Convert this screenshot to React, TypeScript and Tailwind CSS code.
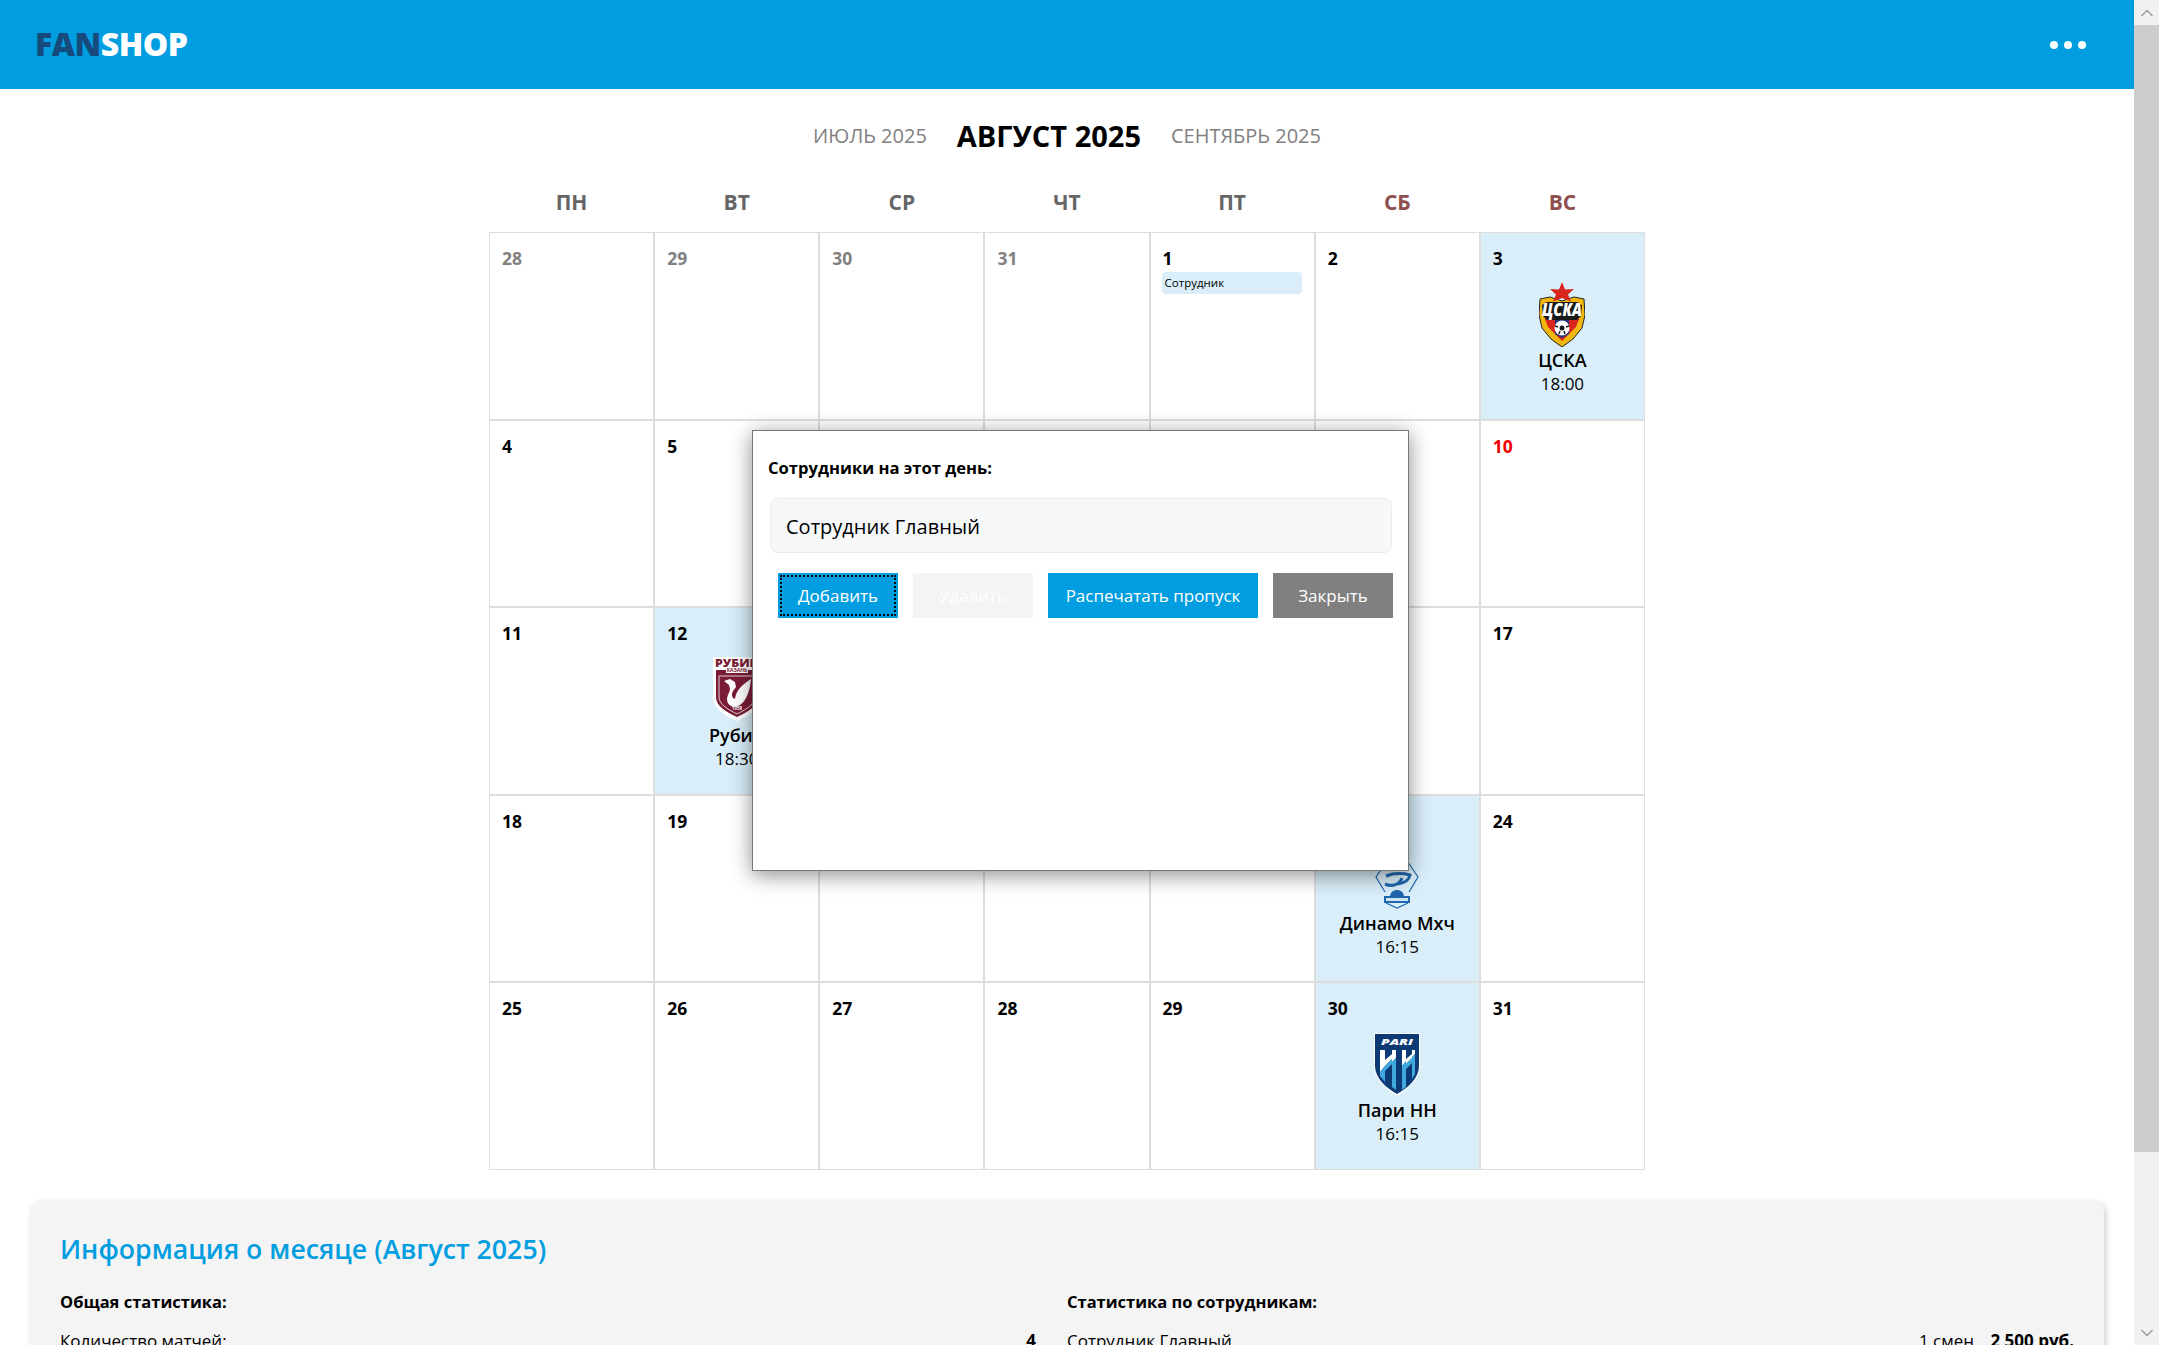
import React from 'react';
import { ChevronUp, ChevronDown } from 'lucide-react';

const font = { fontFamily: '"Open Sans", "Noto Sans", sans-serif' };

const CskaLogo = () => (
  <svg width="46" height="65" viewBox="0 0 46 65">
    <path d="M1 17l10-2 12 4 12-4 10 2 1 16-3 13-9 11-11 8-11-8-9-11-3-13z" fill="#f0b80f" stroke="#222" strokeWidth="1" />
    <path d="M23 0l3 7.500 9-.5-6 5.500 3 7-9-3.500-9 3.500 3-7-6-5.500 9 .5z" fill="#d9251d" />
    <path d="M6 20h34v17l-3 8-14 14-14-14-3-8z" fill="#d9251d" />
    <path d="M16 36h14v16l-7 4-7-4z" fill="#24317e" />
    <path d="M3 23l6-3h28l6 3-1 11-4 4H8l-4-4z" fill="#1a1a1a" />
    <text x="23" y="34" textAnchor="middle" fontSize="17" fontWeight="800" fontStyle="italic" fill="#fff" textLength="40" lengthAdjust="spacingAndGlyphs" style={font}>ЦСКА</text>
    <circle cx="23" cy="46" r="7.500" fill="#fff" />
    <circle cx="23" cy="46" r="2.500" fill="#1a1a1a" />
    <path d="M16 44l3 1M30 44l-3 1M20 52l1-3M26 52l-1-3" stroke="#1a1a1a" strokeWidth="1.500" />
  </svg>
);

const RubinLogo = () => (
  <svg width="48" height="64" viewBox="0 0 48 64">
    <path d="M0 0h48v40c0 11-12 19-24 24C12 59 0 51 0 40z" fill="#fff" />
    <text x="24" y="10" textAnchor="middle" fontSize="11" fontWeight="800" fill="#7a1c36" textLength="44" lengthAdjust="spacingAndGlyphs" style={font}>РУБИН</text>
    <text x="24" y="15" textAnchor="middle" fontSize="5" fontWeight="700" fill="#7a1c36" style={font}>КАЗАНЬ</text>
    <path d="M3 13h10v3h22v-3h10v27c0 9-10 15-21 20C13 55 3 49 3 40z" fill="#7a1c36" />
    <path d="M6 19h36v21c0 7-8 12-18 17C14 52 6 47 6 40z" fill="none" stroke="#fff" strokeWidth="0.800" />
    <path d="M11 24l6-2 5 3 1 5-3 4c-2 4-1 7 2 8 1-9 8-15 16-20-1 11-4 21-11 26-6 4-13 1-13-6 0-4 3-7 3-10l-1-4z" fill="#fff" />
    <text x="24" y="53" textAnchor="middle" fontSize="4.500" fontWeight="700" fill="#fff" style={font}>1958</text>
  </svg>
);

const DynamoLogo = () => (
  <svg width="44" height="64" viewBox="0 0 44 64">
    <path d="M22 1l21 31-9 15M22 1L1 32l9 15M11 58l11 5 11-5" fill="none" stroke="#1f66ad" strokeWidth="1.200" />
    <path d="M10 39c7 3 14 1 17-6M11 31c8-3 16-3 24-1-1 5-6 8-12 9" fill="none" stroke="#1f66ad" strokeWidth="3" />
    <path d="M15 51c1-8 13-8 14 0z" fill="#1f66ad" />
    <rect x="9" y="51" width="26" height="7" fill="#1f66ad" />
    <rect x="11" y="53" width="22" height="3" fill="#cfe4f3" />
  </svg>
);

const PariLogo = () => (
  <svg width="46" height="63" viewBox="0 0 46 63">
    <path d="M0 0h46v33c0 13-12 23-23 30C12 56 0 46 0 33z" fill="#fff" />
    <path d="M1 1h44v32c0 12-11 22-22 28C12 55 1 45 1 33z" fill="#0d3a75" />
    <text x="23" y="12" textAnchor="middle" fontSize="9" fontWeight="800" fontStyle="italic" fill="#fff" textLength="32" lengthAdjust="spacingAndGlyphs" style={font}>PARI</text>
    <path d="M6 17h5v16l-5 6z" fill="#fff" />
    <path d="M11 27l7-6v5l-7 7z" fill="#fff" />
    <path d="M18 17h4v8l-4 4z" fill="#fff" />
    <path d="M28 17h4v11l-4 5z" fill="#fff" />
    <path d="M32 26l6-5v4l-6 6z" fill="#fff" />
    <path d="M38 17h3v4l-3 3z" fill="#fff" />
    <path d="M6 39l5-6v16l-5-6z" fill="#3fa9e0" />
    <path d="M18 29l4-4v32l-4-3z" fill="#3fa9e0" />
    <path d="M28 33l4-5v26l-4 3z" fill="#3fa9e0" />
    <path d="M38 24l3-3v20l-3 5z" fill="#3fa9e0" />
    <path d="M11 33l7-7v5l-7 7zM32 31l6-6v5l-6 6z" fill="#3fa9e0" />
  </svg>
);

type Day = { n: number; muted?: boolean; red?: boolean; name?: string; time?: string; logo?: React.ReactNode; staff?: boolean };

const days: Day[] = [
  { n: 28, muted: true }, { n: 29, muted: true }, { n: 30, muted: true }, { n: 31, muted: true },
  { n: 1, staff: true }, { n: 2 }, { n: 3, name: 'ЦСКА', time: '18:00', logo: <CskaLogo /> },
  { n: 4 }, { n: 5 }, { n: 6 }, { n: 7 }, { n: 8 }, { n: 9 }, { n: 10, red: true },
  { n: 11 }, { n: 12, name: 'Рубин', time: '18:30', logo: <RubinLogo /> }, { n: 13 }, { n: 14 }, { n: 15 }, { n: 16 }, { n: 17 },
  { n: 18 }, { n: 19 }, { n: 20 }, { n: 21 }, { n: 22 }, { n: 23, name: 'Динамо Мхч', time: '16:15', logo: <DynamoLogo /> }, { n: 24 },
  { n: 25 }, { n: 26 }, { n: 27 }, { n: 28 }, { n: 29 }, { n: 30, name: 'Пари НН', time: '16:15', logo: <PariLogo /> }, { n: 31 },
];

const weekdays = ['ПН', 'ВТ', 'СР', 'ЧТ', 'ПТ', 'СБ', 'ВС'];

const DayCell = ({ day }: { day: Day }) => (
  <div className={`h-[187.500px] border border-[#ddd] px-3 pt-[13px] flex flex-col ${day.name ? 'bg-[#d9eef9]' : 'bg-white'}`}>
    <div className={`text-[17.500px] leading-6 font-bold ${day.muted ? 'text-[#808080]' : day.red ? 'text-[#f00000]' : 'text-black'}`}>{day.n}</div>
    {day.staff && (
      <div className="mt-[2px] -mx-[1px] mr-[0px] h-[22px] rounded-[4px] bg-[#d9eef9] px-[3px] text-[11.500px] leading-[22px] text-black">Сотрудник</div>
    )}
    {day.name && (
      <div className="flex flex-col items-center">
        <div className="h-[66px] mt-[11px] flex items-center justify-center">{day.logo}</div>
        <div className="mt-[1px] text-[18px] leading-6 font-semibold text-black whitespace-nowrap">{day.name}</div>
        <div className="text-[17px] leading-6 text-black">{day.time}</div>
      </div>
    )}
  </div>
);

export default function App() {
  return (
    <div className="h-screen flex overflow-hidden bg-white" style={font}>
      <div className="relative flex-1 min-w-0 overflow-hidden">
        <header className="h-[89px] bg-[#009ee0] flex items-center justify-between pl-[35px] pr-[48px]">
          <div className="text-[32px] font-extrabold tracking-[-0.5px] -mt-[2px]">
            <span className="text-[#174a7c]">FAN</span><span className="text-white">SHOP</span>
          </div>
          <div className="flex gap-[6px]">
            <span className="w-2 h-2 rounded-full bg-white" />
            <span className="w-2 h-2 rounded-full bg-white" />
            <span className="w-2 h-2 rounded-full bg-white" />
          </div>
        </header>

        <div className="h-[92px] flex items-center justify-center gap-[30px] pt-[1px]">
          <span className="text-[20px] text-[#808080]">ИЮЛЬ 2025</span>
          <span className="text-[29px] font-bold text-black">АВГУСТ 2025</span>
          <span className="text-[20px] text-[#808080]">СЕНТЯБРЬ 2025</span>
        </div>

        <div className="w-[1156px] mx-auto">
          <div className="grid grid-cols-7 h-[51px] pb-[8px] items-center">
            {weekdays.map((d, i) => (
              <div key={d} className={`text-center text-[21px] font-bold ${i > 4 ? 'text-[#8f4f4f]' : 'text-[#666]'}`}>{d}</div>
            ))}
          </div>
          <div className="grid grid-cols-7">
            {days.map((d, i) => <DayCell key={i} day={d} />)}
          </div>
        </div>

        <section className="mx-[30px] mt-[31px] rounded-xl bg-[#f4f4f4] shadow-[2px_2px_6px_rgba(0,0,0,0.2)] p-[30px]">
          <h2 className="text-[26.700px] leading-9 font-semibold text-[#009ee0]">Информация о месяце (Август 2025)</h2>
          <div className="grid grid-cols-[976px_1fr] gap-[31px] mt-[23px]">
            <div>
              <h3 className="text-[16.500px] leading-6 font-bold text-black">Общая статистика:</h3>
              <div className="flex justify-between mt-[14px] text-[17px] text-black">
                <span>Количество матчей:</span>
                <b>4</b>
              </div>
            </div>
            <div>
              <h3 className="text-[16.500px] leading-6 font-bold text-black">Статистика по сотрудникам:</h3>
              <div className="flex justify-between mt-[14px] text-[17px] text-black">
                <span>Сотрудник Главный</span>
                <span>1 смен <b className="ml-3">2 500 руб.</b></span>
              </div>
            </div>
          </div>
        </section>

        {/* Popup over the calendar */}
        <div className="absolute left-[752px] top-[430px] w-[657px] h-[441px] bg-white border border-[#777] shadow-[0_4px_20px_rgba(0,0,0,0.45)] px-[15px] pt-[25px]">
          <div className="text-[16.600px] leading-6 font-bold text-black">Сотрудники на этот день:</div>
          <div className="mt-[18px] ml-[2px] w-[622px] h-[55px] rounded-lg bg-[#f7f8fa] border border-[#e9ecef] px-[15px] pt-[3px] flex items-center text-[20px] text-black">
            Сотрудник Главный
          </div>
          <div className="mt-[20px] ml-[10px] flex gap-[15px]">
            <button className="w-[120px] h-[45px] bg-[#009ee0] text-white text-[17px] outline-2 outline-dotted outline-black -outline-offset-[4px]">Добавить</button>
            <button className="w-[120px] h-[45px] bg-[#f4f4f4] text-white text-[17px]">Удалить</button>
            <button className="w-[210px] h-[45px] bg-[#009ee0] text-white text-[17px]">Распечатать пропуск</button>
            <button className="w-[120px] h-[45px] bg-[#808080] text-white text-[17px]">Закрыть</button>
          </div>
        </div>
      </div>

      {/* Scrollbar */}
      <div className="w-[25px] shrink-0 bg-[#f1f1f1] flex flex-col">
        <div className="h-[25px] flex items-center justify-center text-[#a0a0a0]"><ChevronUp size={20} /></div>
        <div className="h-[1127px] bg-[#cdcdcd]" />
        <div className="flex-1" />
        <div className="h-[25px] flex items-center justify-center text-[#a0a0a0]"><ChevronDown size={20} /></div>
      </div>
    </div>
  );
}
